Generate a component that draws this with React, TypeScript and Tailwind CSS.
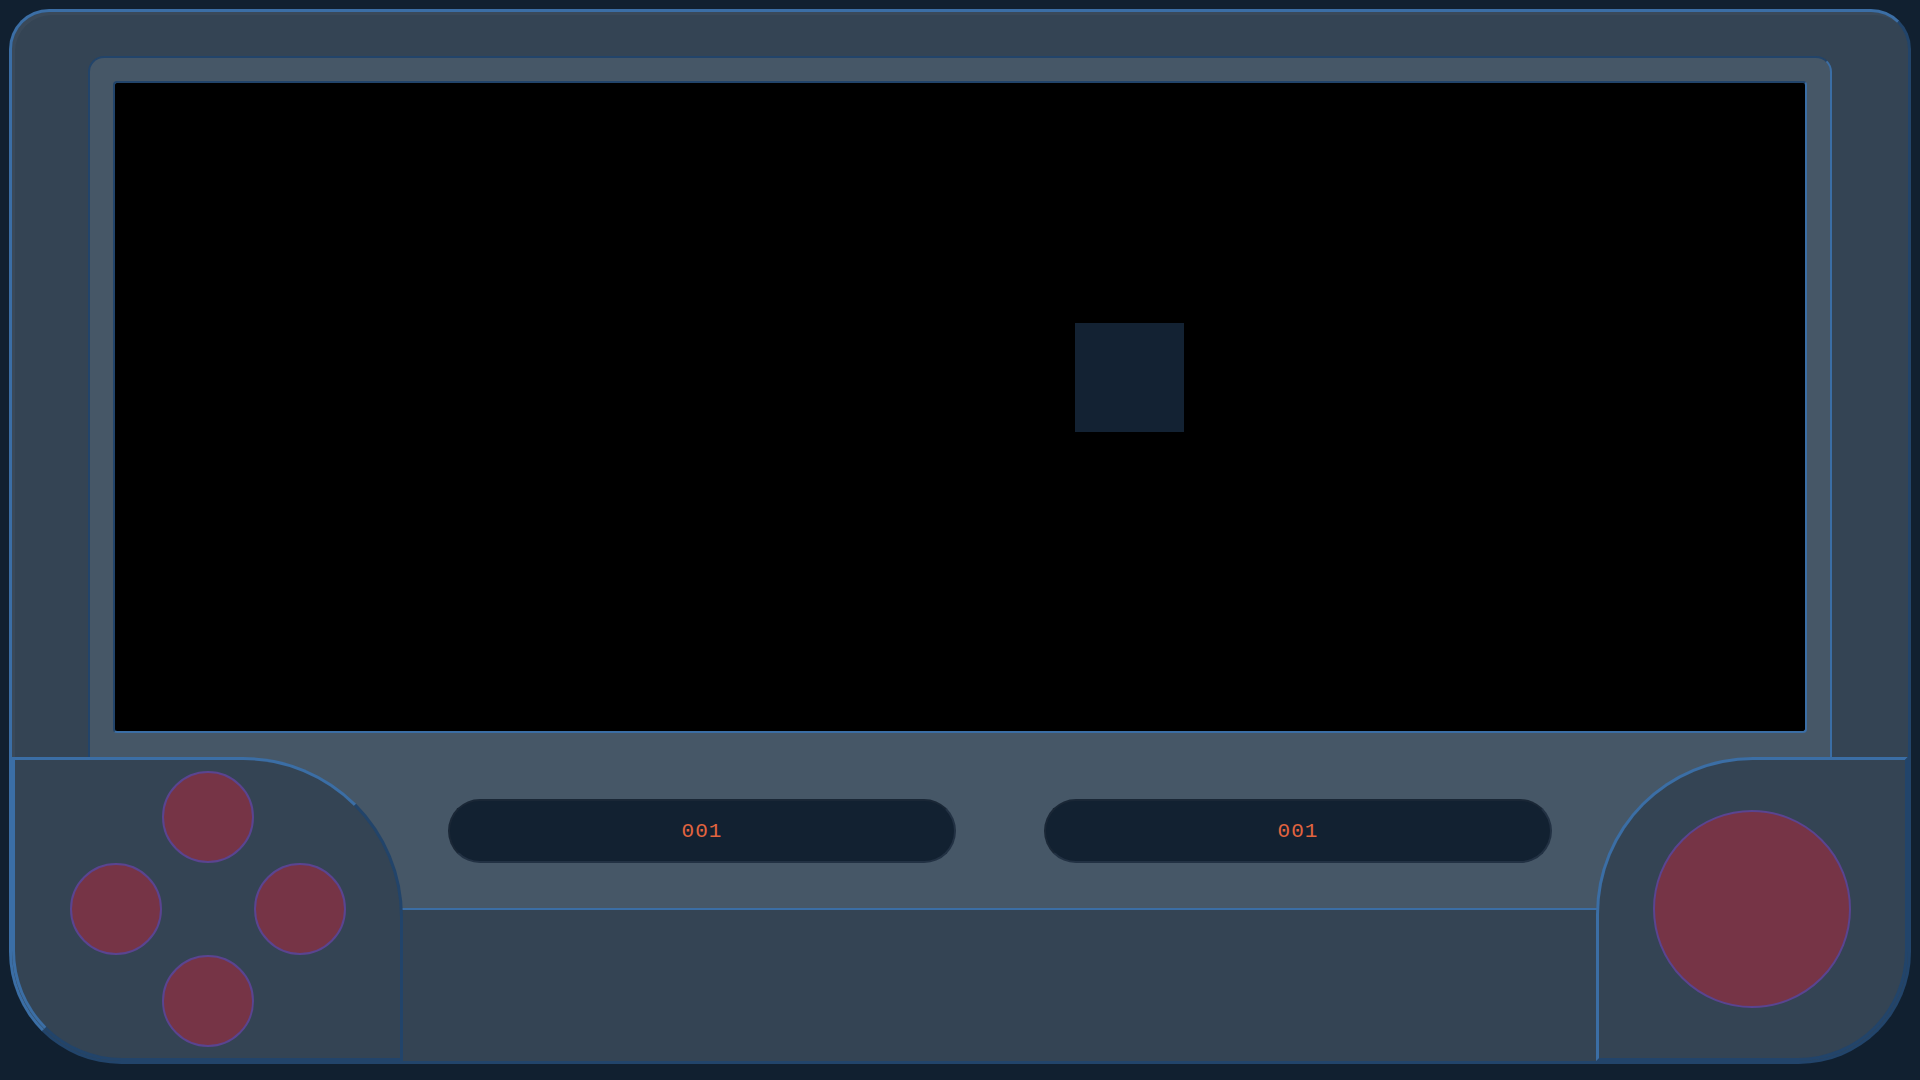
import React from 'react';

function Button({ size }: { size: 'sm' | 'lg' }) {
  return (
    <div
      className={`rounded-full bg-[#763446] border-2 border-[#5a4490] ${
        size === 'sm' ? 'w-[92px] h-[92px]' : 'w-[198px] h-[198px]'
      }`}
    />
  );
}

function Counter({ value }: { value: string }) {
  return (
    <div className="w-[508px] h-[64px] rounded-full bg-[#122131] border-2 border-t-[#1a2736] border-l-[#1a2736] border-r-[#223143] border-b-[#223143] flex items-center justify-center">
      <span className="text-[21px] leading-none tracking-[1px] text-[#e2643f] font-['Liberation_Mono',monospace]">
        {value}
      </span>
    </div>
  );
}

export default function App() {
  return (
    <div className="w-[1920px] h-[1080px] bg-[#112030] pt-[9px] px-[9px] overflow-hidden">
      {/* Console body */}
      <div className="relative h-[1055px] rounded-t-[40px] rounded-b-[112px] border-[3px] border-t-[#3b6ea5] border-l-[#3b6ea5] border-r-[#22446a] border-b-[#22446a] bg-[#344454] pt-[44px] px-[76px] shadow-[inset_3px_3px_0_rgba(255,255,255,0.03)]">
        {/* Screen bezel */}
        <div className="h-[854px] rounded-[16px] border-2 border-t-[#22446a] border-l-[#22446a] border-r-[#3b6ea5] border-b-[#3b6ea5] bg-[#465767] pt-[23px] px-[23px]">
          {/* Screen */}
          <div className="relative h-[652px] rounded-[4px] border-2 border-t-[#22446a] border-l-[#22446a] border-r-[#3b6ea5] border-b-[#3b6ea5] bg-black">
            <div className="absolute left-[960px] top-[240px] w-[109px] h-[109px] bg-[#132233]" />
          </div>

          {/* Counters */}
          <div className="flex gap-[88px] pl-[335px] pt-[66px]">
            <Counter value="001" />
            <Counter value="001" />
          </div>
        </div>

        {/* Left pad */}
        <div className="absolute left-0 bottom-0 w-[391px] h-[304px] rounded-tr-[160px] rounded-bl-[110px] border-[3px] border-t-[#3b6ea5] border-l-[#3b6ea5] border-r-[#22446a] border-b-[#22446a] bg-[#344454] flex items-center justify-center">
          <div className="grid grid-cols-[92px_92px_92px] grid-rows-[92px_92px_92px]">
            <div />
            <Button size="sm" />
            <div />
            <Button size="sm" />
            <div />
            <Button size="sm" />
            <div />
            <Button size="sm" />
            <div />
          </div>
        </div>

        {/* Right pad */}
        <div className="absolute right-0 bottom-0 w-[312px] h-[304px] rounded-tl-[157px] rounded-br-[110px] border-[3px] border-t-[#3b6ea5] border-l-[#3b6ea5] border-r-[#22446a] border-b-[#22446a] bg-[#344454] flex items-center justify-center">
          <Button size="lg" />
        </div>
      </div>
    </div>
  );
}
